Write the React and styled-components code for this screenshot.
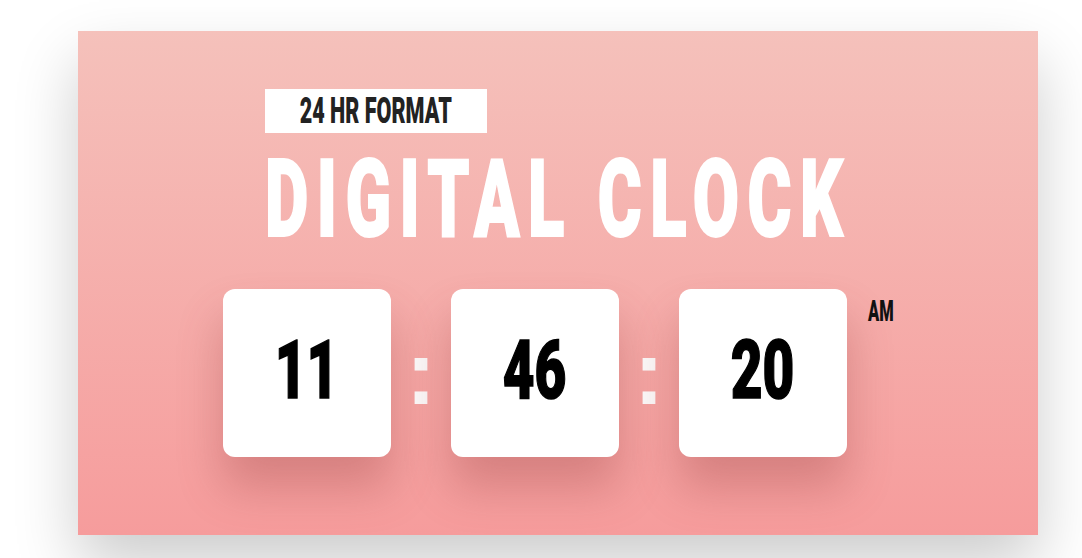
import styled, { createGlobalStyle } from 'styled-components';

const GlobalStyle = createGlobalStyle`
    html, body {
        margin: 0;
        padding: 0;
        background-color: #FFFFFF;
    }
    body {
        font-family: 'Roboto', 'Liberation Sans', sans-serif;
    }
`

export default function App() {

    const hora = { horas: '11', minutos: '46', segundos: '20', periodo: 'AM' };

    return (
        <>
            <GlobalStyle />
            <Page>
                <Card>
                    <Header>
                        <Formato>
                            <Squeeze $k={0.6}>24 HR FORMAT</Squeeze>
                        </Formato>
                        <Titulo>
                            <Squeeze $k={0.62} $origin="left">DIGITAL CLOCK</Squeeze>
                        </Titulo>
                    </Header>
                    <Relogio>
                        <Caixa><Squeeze $k={0.67}>{hora.horas}</Squeeze></Caixa>
                        <DoisPontos>:</DoisPontos>
                        <Caixa><Squeeze $k={0.67}>{hora.minutos}</Squeeze></Caixa>
                        <DoisPontos>:</DoisPontos>
                        <Caixa><Squeeze $k={0.67}>{hora.segundos}</Squeeze></Caixa>
                        <Periodo><Squeeze $k={0.56} $origin="left">{hora.periodo}</Squeeze></Periodo>
                    </Relogio>
                </Card>
            </Page>
        </>
    )
}

const Squeeze = styled.span`
    display: inline-block;
    white-space: nowrap;
    transform: scaleX(${p => p.$k});
    transform-origin: ${p => p.$origin || 'center'};
`
const Page = styled.div`
    width: 1082px;
    height: 558px;
    box-sizing: border-box;
    padding: 31px 0 0 78px;
    overflow: hidden;
`
const Card = styled.div`
    width: 960px;
    height: 504px;
    box-sizing: border-box;
    padding-top: 58px;
    display: flex;
    flex-direction: column;
    align-items: center;
    background: linear-gradient(to bottom, #F5C1BB, #F69C9C);
    box-shadow: 0 30px 60px rgba(0, 0, 0, 0.2);
`
const Header = styled.div`
    width: 586px;
    display: flex;
    flex-direction: column;
    align-items: flex-start;
`
const Formato = styled.div`
    width: 222px;
    height: 44px;
    display: flex;
    align-items: center;
    justify-content: center;
    background-color: #FFFFFF;
    font-size: 36px;
    font-weight: 900;
    line-height: 1;
    color: #222222;
`
const Titulo = styled.h1`
    margin: 12px 0 0 0;
    font-size: 108px;
    font-weight: 900;
    line-height: 1;
    letter-spacing: 13.6px;
    color: #FFFFFF;
    -webkit-text-stroke: 2px #FFFFFF;
`
const Relogio = styled.div`
    margin-top: 36px;
    display: flex;
    align-items: center;
`
const Caixa = styled.div`
    width: 168px;
    height: 168px;
    box-sizing: border-box;
    padding-bottom: 7px;
    display: flex;
    align-items: center;
    justify-content: center;
    background-color: #FFFFFF;
    border-radius: 12px;
    box-shadow: 0 30px 45px rgba(150, 60, 60, 0.33);
    font-size: 82px;
    font-weight: 900;
    line-height: 1;
    color: #000000;
    -webkit-text-stroke: 1.5px #000000;
`
const DoisPontos = styled.div`
    width: 60px;
    text-align: center;
    font-family: 'Liberation Sans', sans-serif;
    font-size: 90px;
    font-weight: 700;
    line-height: 1;
    color: #FAF7F7;
`
const Periodo = styled.div`
    align-self: flex-start;
    width: 25px;
    margin: 8px 0 0 21px;
    font-size: 29.5px;
    font-weight: 900;
    line-height: 1;
    color: #111111;
`
